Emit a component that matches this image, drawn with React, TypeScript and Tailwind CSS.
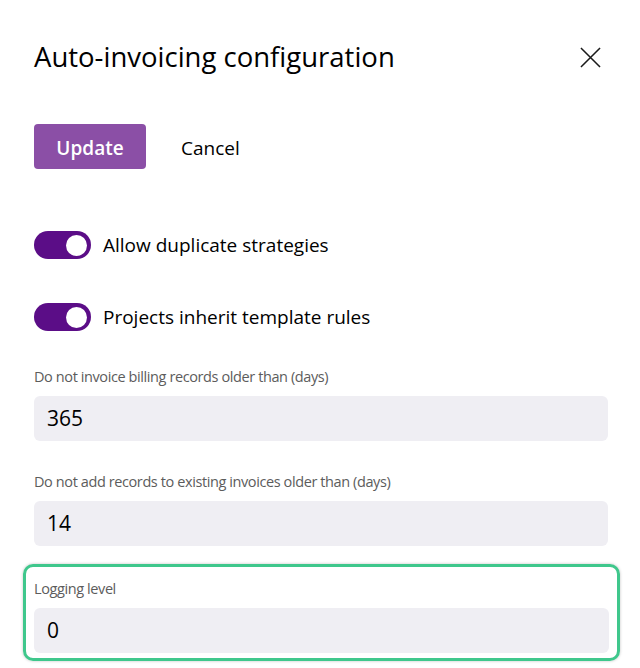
import { useState } from "react";

function Toggle({ on, onClick }: { on: boolean; onClick: () => void }) {
  return (
    <button
      type="button"
      onClick={onClick}
      className={`flex h-[28px] w-[57px] shrink-0 items-center rounded-full px-[4px] ${
        on ? "justify-end bg-[#5b0d87]" : "justify-start bg-gray-400"
      }`}
    >
      <span className="h-[21px] w-[21px] rounded-full bg-white" />
    </button>
  );
}

function Field({ label, value }: { label: string; value: string }) {
  return (
    <div className="flex flex-col">
      <span className="text-[14.5px] leading-[20px] tracking-[-0.4px] text-[#5c5c5c]">{label}</span>
      <div className="mt-[9px] flex h-[45px] items-center rounded-[6px] bg-[#efeef3] px-[13px] text-[21px] text-black">
        {value}
      </div>
    </div>
  );
}

export default function App() {
  const [dupes, setDupes] = useState(true);
  const [inherit, setInherit] = useState(true);

  return (
    <main
      className="min-h-[668px] bg-white pl-[34px] pr-[32px] text-black"
      style={{ fontFamily: '"Open Sans", "Noto Sans", sans-serif' }}
    >
      {/* Title & close */}
      <div className="flex items-center justify-between pt-[38px]">
        <h1 className="text-[27.5px] leading-[38px]">Auto-invoicing configuration</h1>
        <svg
          viewBox="0 0 22 22"
          className="mr-[7px] h-[21px] w-[21px]"
          fill="none"
          stroke="#1a1a1a"
          strokeWidth="1.6"
        >
          <path d="M1 1 L21 21 M21 1 L1 21" />
        </svg>
      </div>

      {/* Actions */}
      <div className="mt-[48px] flex items-center gap-[35px]">
        <button
          type="button"
          className="h-[45px] w-[112px] rounded-[4px] bg-[#8b4fa6] pt-[3px] text-[19px] font-semibold text-white"
        >
          Update
        </button>
        <button type="button" className="pt-[3px] text-[19px]">
          Cancel
        </button>
      </div>

      {/* Toggles */}
      <div className="mt-[62px] flex flex-col gap-[44px]">
        <label className="flex items-center gap-[12px] text-[19px] leading-[28px]">
          <Toggle on={dupes} onClick={() => setDupes(!dupes)} />
          Allow duplicate strategies
        </label>
        <label className="flex items-center gap-[12px] text-[19px] leading-[28px]">
          <Toggle on={inherit} onClick={() => setInherit(!inherit)} />
          Projects inherit template rules
        </label>
      </div>

      {/* Fields */}
      <div className="mt-[36px] flex flex-col gap-[31px]">
        <Field label="Do not invoice billing records older than (days)" value="365" />
        <Field label="Do not add records to existing invoices older than (days)" value="14" />
      </div>

      {/* Highlighted field */}
      <div className="-ml-[11px] -mr-[12px] mt-[18px] rounded-[10px] border-[3px] border-[#3fc78c] px-[8px] pb-[5px] pt-[12px] shadow-[0_0_3px_rgba(0,0,0,0.25)]">
        <Field label="Logging level" value="0" />
      </div>
    </main>
  );
}
